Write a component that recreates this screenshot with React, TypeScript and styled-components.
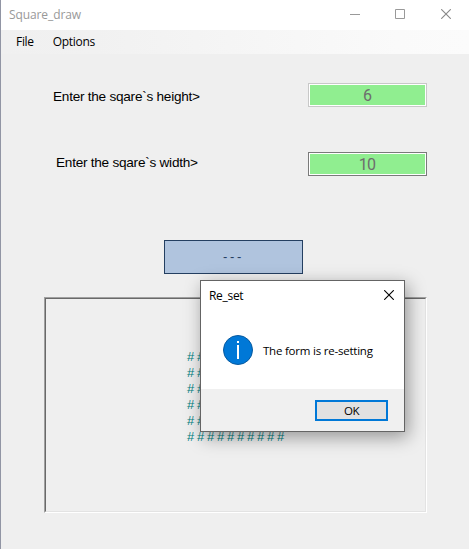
import React from "react";
import styled, { createGlobalStyle } from "styled-components";

const GlobalStyle = createGlobalStyle`
  * { box-sizing: border-box; }
  html, body { margin: 0; padding: 0; overflow: hidden; }
`;

const Window = styled.div`
  position: relative;
  display: flex;
  flex-direction: column;
  width: 469px;
  height: 549px;
  overflow: hidden;
  background: #efefef;
  border-left: 1px solid #9195a4;
  font-family: "Open Sans", "Noto Sans", sans-serif;
  color: #000;
`;

const TitleBar = styled.header`
  display: flex;
  align-items: center;
  justify-content: space-between;
  height: 30px;
  flex: none;
  padding: 0 17px 0 8px;
  background: #fff;
`;

const Caption = styled.span<{ $color?: string; $spacing?: string; $size?: number }>`
  font-size: ${(p) => p.$size ?? 12}px;
  line-height: 16px;
  white-space: nowrap;
  letter-spacing: ${(p) => p.$spacing ?? "-0.3px"};
  color: ${(p) => p.$color ?? "#000"};
`;

const WindowControls = styled.div`
  display: grid;
  grid-template-columns: 44px 47px 11px;
  height: 11px;
  margin-top: -1px;
`;

const MenuBar = styled.nav`
  display: flex;
  align-items: center;
  gap: 19px;
  height: 24px;
  flex: none;
  padding-left: 15px;
  background: linear-gradient(90deg, #f0f0f0 0%, #f1f1f1 20%, #fafafa 85%, #fbfbfb 100%);
`;

const Form = styled.main`
  display: flex;
  flex-direction: column;
  padding: 29px 42px 0 43px;
`;

const Field = styled.label<{ $indent: number }>`
  display: flex;
  align-items: center;
  justify-content: space-between;
  height: 24px;
  margin-bottom: 45px;
  padding-left: ${(p) => p.$indent}px;
`;

const FieldText = styled.span<{ $shift: number }>`
  font: 13.6px/16px "Liberation Sans", Arial, sans-serif;
  letter-spacing: -0.25px;
  white-space: nowrap;
  margin-top: ${(p) => p.$shift}px;
`;

const NumberBox = styled.span<{ $border: string }>`
  display: flex;
  align-items: center;
  justify-content: center;
  width: 119px;
  height: 24px;
  border: 1px solid ${(p) => p.$border};
  background: #90ee90;
  box-shadow: inset 0 0 0 1px #fff;
  color: #6d6d6d;
  font: 16px/22px Roboto, sans-serif;
  letter-spacing: -0.8px;
  padding: 2px 1px 0 0;
`;

const DrawButton = styled.button`
  width: 139px;
  height: 34px;
  margin: 19px 0 23px 120px;
  padding: 0;
  border: 1px solid #243f61;
  background: #b0c4de;
  color: #243f61;
  font: 13px/16px "Liberation Sans", Arial, sans-serif;
  letter-spacing: 2.7px;
`;

const Canvas = styled.section`
  width: 383px;
  height: 216px;
  border: 1px solid;
  border-color: #a0a0a0 #fff #fff #a0a0a0;
`;

const CanvasInner = styled.div`
  height: 100%;
  padding: 50px 0 0 141px;
  border: 1px solid;
  border-color: #696969 #e3e3e3 #e3e3e3 #696969;
`;

const HashRow = styled.div`
  height: 16px;
  font: 13px/16px "Liberation Sans", Arial, sans-serif;
  letter-spacing: -0.42px;
  white-space: nowrap;
  color: #008080;
`;

const Dialog = styled.div`
  position: absolute;
  left: 199px;
  top: 280px;
  display: flex;
  flex-direction: column;
  width: 205px;
  height: 152px;
  border: 1px solid #646464;
  background: #fff;
  box-shadow: 3px 5px 17px rgba(0, 0, 0, 0.38);
`;

const DialogTitle = styled.div`
  display: flex;
  align-items: center;
  justify-content: space-between;
  height: 30px;
  padding: 0 10px 0 8px;

  svg { margin-top: -3px; }
`;

const DialogBody = styled.div`
  display: flex;
  align-items: center;
  gap: 10px;
  flex: 1;
  padding: 0 0 1px 22px;

  span { margin-top: 2px; }
`;

const DialogFooter = styled.div`
  display: flex;
  justify-content: flex-end;
  height: 42px;
  padding: 11px 16px 0 0;
  background: #f0f0f0;
`;

const OkButton = styled.button`
  width: 73px;
  height: 21px;
  padding: 0;
  border: 2px solid #0078d7;
  background: #e1e1e1;
  color: #000;
  font: 11.5px/17px "Open Sans", "Noto Sans", sans-serif;
  letter-spacing: -0.4px;
`;

const CloseIcon = ({ color }: { color: string }) => (
  <svg width="10" height="10" viewBox="0 0 10 10" fill="none" stroke={color} strokeWidth="1.1">
    <path d="M.2 .2l9.6 9.6M9.8 .2l-9.6 9.6" />
  </svg>
);

const ROWS = 6;
const COLUMNS = 10;
const row = Array(COLUMNS).fill("#").join(" ");

export default function App() {
  return (
    <>
      <GlobalStyle />
      <Window>
        <TitleBar>
          <Caption $color="#999" $spacing="-0.1px">Square_draw</Caption>
          <WindowControls>
            <svg width="10" height="11" viewBox="0 0 10 11"><path d="M0 5.5h10" stroke="#999" /></svg>
            <svg width="11" height="11" viewBox="0 0 11 11"><path d="M1.5 .5h9v9h-9z" fill="none" stroke="#999" /></svg>
            <CloseIcon color="#888" />
          </WindowControls>
        </TitleBar>
        <MenuBar>
          <Caption>File</Caption>
          <Caption>Options</Caption>
        </MenuBar>
        <Form>
          <Field $indent={9}>
            <FieldText $shift={4}>Enter the sqare`s height&gt;</FieldText>
            <NumberBox $border="#c8c8c8">6</NumberBox>
          </Field>
          <Field $indent={12}>
            <FieldText $shift={-2}>Enter the sqare`s width&gt;</FieldText>
            <NumberBox $border="#7a7a7a">10</NumberBox>
          </Field>
          <DrawButton>---</DrawButton>
          <Canvas>
            <CanvasInner>
              {Array.from({ length: ROWS }, (_, i) => <HashRow key={i}>{row}</HashRow>)}
            </CanvasInner>
          </Canvas>
        </Form>
        <Dialog role="dialog">
          <DialogTitle>
            <Caption>Re_set</Caption>
            <CloseIcon color="#000" />
          </DialogTitle>
          <DialogBody>
            <svg width="30" height="30" viewBox="0 0 30 30">
              <circle cx="15" cy="15" r="14.5" fill="#0078d7" stroke="#085a9f" />
              <path d="M14 6h2v2h-2zM14 10h2v14h-2z" fill="#fff" />
            </svg>
            <Caption $size={11.5} $spacing="-0.22px">The form is re-setting</Caption>
          </DialogBody>
          <DialogFooter>
            <OkButton>OK</OkButton>
          </DialogFooter>
        </Dialog>
      </Window>
    </>
  );
}
